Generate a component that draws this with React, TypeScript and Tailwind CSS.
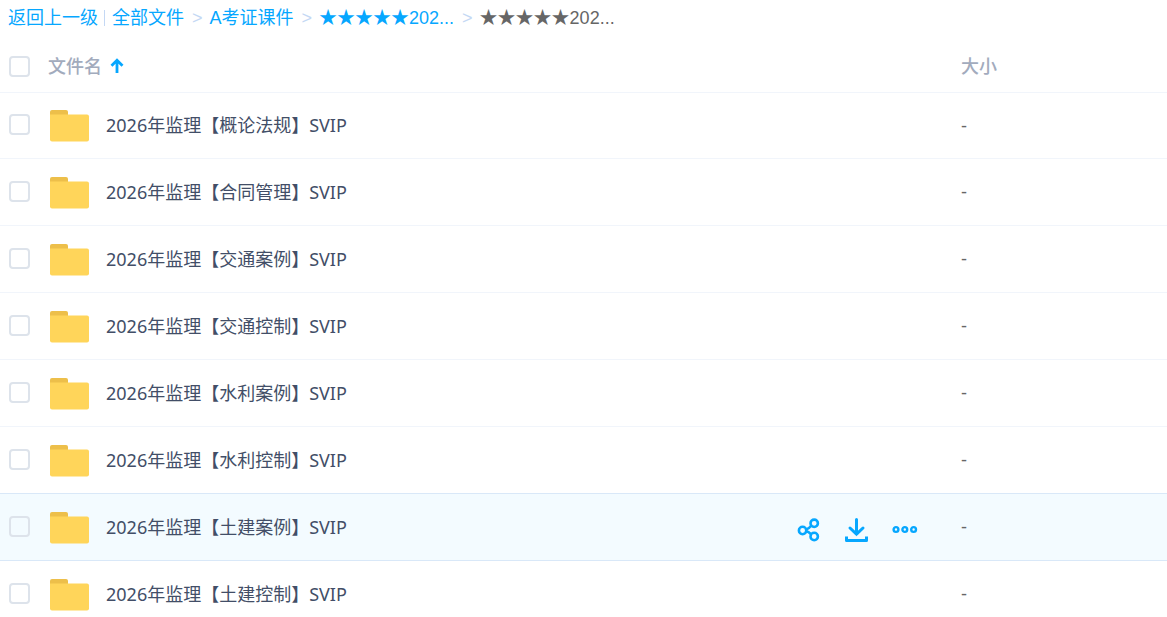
import { useState } from 'react';

const files = [
  '2026年监理【概论法规】SVIP',
  '2026年监理【合同管理】SVIP',
  '2026年监理【交通案例】SVIP',
  '2026年监理【交通控制】SVIP',
  '2026年监理【水利案例】SVIP',
  '2026年监理【水利控制】SVIP',
  '2026年监理【土建案例】SVIP',
  '2026年监理【土建控制】SVIP',
];

const crumbs = ['全部文件', 'A考证课件', '★★★★★202...'];

function FolderIcon() {
  return (
    <svg width="40" height="32" viewBox="0 0 40 32" className="shrink-0" aria-hidden="true">
      <path d="M0 8V2a2 2 0 0 1 2-2H16a2 2 0 0 1 2 2V8z" fill="#edbf4a" />
      <path d="M0 4.600H37a2 2 0 0 1 2 2V29.500a2 2 0 0 1-2 2H2a2 2 0 0 1-2-2z" fill="#ffd55a" />
    </svg>
  );
}

function SortIcon() {
  return (
    <svg width="14" height="16" viewBox="0 0 14 16" fill="none" stroke="#06a7ff" strokeWidth="2.800" aria-hidden="true">
      <path d="M7 15V2.500M1.500 7.700L7 2.200l5.500 5.500" />
    </svg>
  );
}

function ShareIcon() {
  return (
    <svg width="24" height="24" viewBox="0 0 24 24" fill="none" stroke="#06a7ff" strokeWidth="2.600" aria-hidden="true">
      <circle cx="6.600" cy="12.500" r="3.700" />
      <circle cx="18.200" cy="5.300" r="3.700" />
      <circle cx="18.200" cy="18.500" r="3.700" />
      <path d="M9.800 11.800c2.200-.6 3.700-1.900 5.400-4M9.800 13c2.200.4 3.700 1.500 5.200 3.200" />
    </svg>
  );
}

function DownloadIcon() {
  return (
    <svg width="24" height="26" viewBox="0 0 24 26" fill="none" stroke="#06a7ff" strokeWidth="3" aria-hidden="true">
      <path d="M12.500 2.500V17M6 11l6.500 6.200L19 11" strokeLinecap="round" />
      <path d="M2.500 19.500v4H22.500v-4" strokeLinejoin="round" />
    </svg>
  );
}

function MoreIcon() {
  return (
    <svg width="26" height="10" viewBox="0 0 26 10" fill="none" stroke="#06a7ff" strokeWidth="2.400" aria-hidden="true">
      <circle cx="4" cy="4.500" r="2.400" />
      <circle cx="12.800" cy="4.500" r="2.400" />
      <circle cx="21.600" cy="4.500" r="2.400" />
    </svg>
  );
}

function Checkbox({ label, checked, onChange }: { label: string; checked: boolean; onChange: () => void }) {
  return (
    <input
      type="checkbox"
      aria-label={label}
      checked={checked}
      onChange={onChange}
      className="block size-[21px] appearance-none rounded-[4px] border-2 border-[#dde3eb] checked:border-[#06a7ff] checked:bg-[#06a7ff]"
    />
  );
}

export default function App() {
  const [selected, setSelected] = useState<number[]>([]);
  const [active, setActive] = useState(6);

  const toggle = (index: number) => {
    setSelected(selected.includes(index) ? selected.filter((i) => i !== index) : [...selected, index]);
  };

  return (
    <div className="h-screen overflow-hidden bg-white font-['Noto_Sans','Noto_Sans_CJK_SC',sans-serif] text-[18px] leading-6">
      <nav className="flex items-center gap-[7px] px-2 py-[6px] font-['Liberation_Sans','Noto_Sans_CJK_SC',sans-serif] whitespace-nowrap text-[#06a7ff]">
        <div className="flex items-center gap-[6px]">
          <a href="#back">返回上一级</a>
          <span className="h-4 w-px bg-[#c4d8f4]" />
        </div>
        {crumbs.map((crumb) => (
          <div key={crumb} className="flex items-center gap-2">
            <a href="#folder">{crumb}</a>
            <span className="text-[#c4d8f4]">&gt;</span>
          </div>
        ))}
        <span className="text-[#666666]">★★★★★202...</span>
      </nav>

      <table className="w-full table-fixed border-separate border-spacing-0 text-left">
        <thead>
          <tr className="h-[57px] text-[#a2abbd]">
            <th className="w-12 border-b border-[#f1f5fb] pt-1 pl-[9px]">
              <Checkbox
                label="全选"
                checked={selected.length === files.length}
                onChange={() => setSelected(selected.length === files.length ? [] : files.map((_, i) => i))}
              />
            </th>
            <th className="border-b border-[#f1f5fb] pt-1 font-medium">
              <button className="flex items-center gap-2">
                文件名
                <SortIcon />
              </button>
            </th>
            <th className="w-[206px] border-b border-[#f1f5fb] pt-1 font-medium">大小</th>
          </tr>
        </thead>
        <tbody>
          {files.map((name, index) => {
            const border = index === active || index === active - 1 ? 'border-[#d9e8f8]' : 'border-[#f1f5fb]';
            return (
              <tr
                key={name}
                onMouseEnter={() => setActive(index)}
                className={`h-[67px] first:h-[66px] ${index === active ? 'bg-[#f3fbff]' : ''}`}
              >
                <td className={`border-b pb-[2px] pl-[9px] ${border}`}>
                  <Checkbox label={name} checked={selected.includes(index)} onChange={() => toggle(index)} />
                </td>
                <td className={`border-b pt-px pl-[2px] ${border}`}>
                  <div className="flex items-center gap-4">
                    <FolderIcon />
                    <a href="#file" className="flex-1 truncate pb-[2px] text-[#424e67]">
                      {name}
                    </a>
                    {index === active && (
                      <div className="flex items-center gap-6 pt-1 pr-[43px]">
                        <button aria-label="分享">
                          <ShareIcon />
                        </button>
                        <button aria-label="下载">
                          <DownloadIcon />
                        </button>
                        <button aria-label="更多">
                          <MoreIcon />
                        </button>
                      </div>
                    )}
                  </div>
                </td>
                <td className={`border-b font-['Liberation_Sans',sans-serif] text-[#666666] ${border}`}>-</td>
              </tr>
            );
          })}
        </tbody>
      </table>
    </div>
  );
}
